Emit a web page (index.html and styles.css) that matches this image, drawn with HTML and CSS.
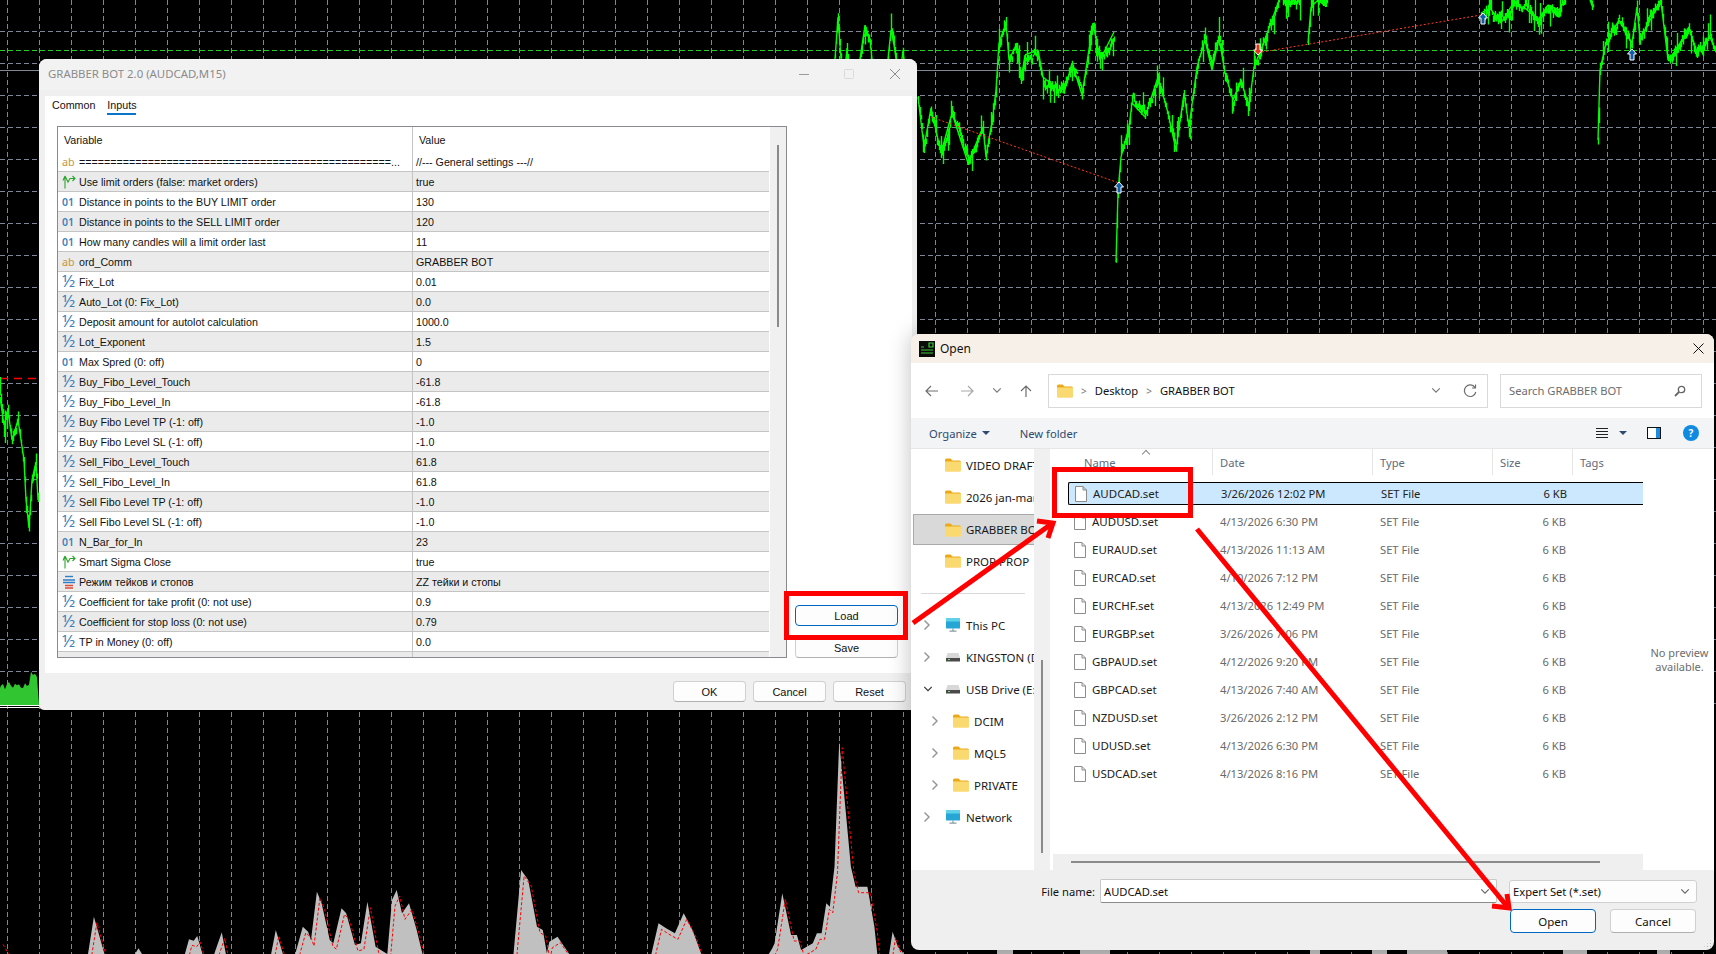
FILE: index.html
```html
<!DOCTYPE html>
<html lang="en">
<head>
    <meta charset="UTF-8">
    <title>GRABBER BOT 2.0</title>
    <link rel="stylesheet" href="styles.css">
</head>
<body>
    <svg width="0" height="0" class="defs">
        <symbol id="bool" viewBox="0 0 14 14">
            <path d="M3 13.500V1M3 1L1 5.500M3 1l3 6 2-3.500h5M10.500 1L13 3.500 10.500 6" fill="none" stroke="#2aa52a" stroke-width="1.100"/>
        </symbol>
        <symbol id="enum" viewBox="0 0 14 14">
            <path d="M3 1.500h8" stroke="#2f7fc8" stroke-width="1.400"/>
            <path d="M1 5h12M1 7.500h12" stroke="#2f7fc8" stroke-width="1.400"/>
            <path d="M3 10.500h8M3 13h8" stroke="#e0483a" stroke-width="1.300"/>
        </symbol>
        <symbol id="folder" viewBox="0 0 16 14">
            <path d="M0 2q0-1.500 1.500-1.500h4l2 2h7q1.500 0 1.500 1.500v1H0z" fill="#eba919"/>
            <path d="M0 3.500h16v9q0 1.300-1.300 1.300H1.300Q0 13.800 0 12.500z" fill="#fbd971"/>
        </symbol>
        <symbol id="file" viewBox="0 0 12 16">
            <path d="M.5.5h7.500l3.500 3.500v11.500H.5zM8 .5V4h3.500" fill="#fff" stroke="#8b8b8b"/>
        </symbol>
        <symbol id="chev-r" viewBox="0 0 8 12">
            <path d="M1.500 1.500L6 6l-4.500 4.500" fill="none" stroke="#9a9a9a" stroke-width="1.500"/>
        </symbol>
        <symbol id="chev-d" viewBox="0 0 12 8">
            <path d="M1.500 1.500L6 6l4.500-4.500" fill="none" stroke="currentColor" stroke-width="1.400"/>
        </symbol>
        <symbol id="drive" viewBox="0 0 16 10">
            <path d="M2.500 1h11L15 6H1z" fill="#d8d8d8"/>
            <rect x="1" y="6" width="14" height="3.500" fill="#4a4a4a"/>
            <rect x="3" y="7" width="2" height="1" fill="#6fe06f"/>
        </symbol>
        <symbol id="monitor" viewBox="0 0 16 16">
            <rect x="0" y="0" width="16" height="12" rx="1" fill="#27a6d6"/>
            <rect x="0" y="0" width="16" height="4" fill="#5fd2ea"/>
            <path d="M8 12v2.500M4 15h8" stroke="#8a9aa5" stroke-width="1.400"/>
        </symbol>
    </svg>

    <svg id="chart" class="chart" width="1716" height="954"></svg>

    <div class="mt-window">
        <div class="mt-title">
            <span class="mt-caption">GRABBER BOT 2.0 (AUDCAD,M15)</span>
            <svg class="mt-controls" width="102" height="12" viewBox="0 0 102 12">
                <path d="M0 6.500h10" stroke="#9a9a9a"/>
                <rect x="45.500" y="1.500" width="9" height="9" rx="1" fill="none" stroke="#dadada"/>
                <path d="M91 1l10 10M101 1L91 11" stroke="#8c8c8c"/>
            </svg>
        </div>
        <div class="mt-client">
            <div class="tabs">
                <span class="tab">Common</span>
                <span class="tab tab-active">Inputs</span>
            </div>
            <div class="mt-main">
                <div class="inputs">
                    <div class="inputs-body">
                        <div class="row row-head"><span class="cell-name">Variable</span><span class="cell-value">Value</span></div>
                        <div class="row"><span class="cell-name"><span class="ico ab">ab</span><span class="clip">==================================================...</span></span><span class="cell-value">//--- General settings ---//</span></div>
                        <div class="row"><span class="cell-name"><svg class="ico-svg"><use href="#bool"/></svg>Use limit orders (false: market orders)</span><span class="cell-value">true</span></div>
                        <div class="row"><span class="cell-name"><span class="ico int">01</span>Distance in points to the BUY LIMIT order</span><span class="cell-value">130</span></div>
                        <div class="row"><span class="cell-name"><span class="ico int">01</span>Distance in points to the SELL LIMIT order</span><span class="cell-value">120</span></div>
                        <div class="row"><span class="cell-name"><span class="ico int">01</span>How many candles will a limit order last</span><span class="cell-value">11</span></div>
                        <div class="row"><span class="cell-name"><span class="ico ab">ab</span>ord_Comm</span><span class="cell-value">GRABBER BOT</span></div>
                        <div class="row"><span class="cell-name"><span class="ico dbl">½</span>Fix_Lot</span><span class="cell-value">0.01</span></div>
                        <div class="row"><span class="cell-name"><span class="ico dbl">½</span>Auto_Lot (0: Fix_Lot)</span><span class="cell-value">0.0</span></div>
                        <div class="row"><span class="cell-name"><span class="ico dbl">½</span>Deposit amount for autolot calculation</span><span class="cell-value">1000.0</span></div>
                        <div class="row"><span class="cell-name"><span class="ico dbl">½</span>Lot_Exponent</span><span class="cell-value">1.5</span></div>
                        <div class="row"><span class="cell-name"><span class="ico int">01</span>Max Spred (0: off)</span><span class="cell-value">0</span></div>
                        <div class="row"><span class="cell-name"><span class="ico dbl">½</span>Buy_Fibo_Level_Touch</span><span class="cell-value">-61.8</span></div>
                        <div class="row"><span class="cell-name"><span class="ico dbl">½</span>Buy_Fibo_Level_In</span><span class="cell-value">-61.8</span></div>
                        <div class="row"><span class="cell-name"><span class="ico dbl">½</span>Buy Fibo Level TP (-1: off)</span><span class="cell-value">-1.0</span></div>
                        <div class="row"><span class="cell-name"><span class="ico dbl">½</span>Buy Fibo Level SL (-1: off)</span><span class="cell-value">-1.0</span></div>
                        <div class="row"><span class="cell-name"><span class="ico dbl">½</span>Sell_Fibo_Level_Touch</span><span class="cell-value">61.8</span></div>
                        <div class="row"><span class="cell-name"><span class="ico dbl">½</span>Sell_Fibo_Level_In</span><span class="cell-value">61.8</span></div>
                        <div class="row"><span class="cell-name"><span class="ico dbl">½</span>Sell Fibo Level TP (-1: off)</span><span class="cell-value">-1.0</span></div>
                        <div class="row"><span class="cell-name"><span class="ico dbl">½</span>Sell Fibo Level SL (-1: off)</span><span class="cell-value">-1.0</span></div>
                        <div class="row"><span class="cell-name"><span class="ico int">01</span>N_Bar_for_In</span><span class="cell-value">23</span></div>
                        <div class="row"><span class="cell-name"><svg class="ico-svg"><use href="#bool"/></svg>Smart Sigma Close</span><span class="cell-value">true</span></div>
                        <div class="row"><span class="cell-name"><svg class="ico-svg"><use href="#enum"/></svg>Режим тейков и стопов</span><span class="cell-value">ZZ тейки и стопы</span></div>
                        <div class="row"><span class="cell-name"><span class="ico dbl">½</span>Coefficient for take profit (0: not use)</span><span class="cell-value">0.9</span></div>
                        <div class="row"><span class="cell-name"><span class="ico dbl">½</span>Coefficient for stop loss (0: not use)</span><span class="cell-value">0.79</span></div>
                        <div class="row"><span class="cell-name"><span class="ico dbl">½</span>TP in Money (0: off)</span><span class="cell-value">0.0</span></div>
                        <div class="row row-cut"><span class="cell-name"></span><span class="cell-value"></span></div>
                    </div>
                    <div class="inputs-scroll"><div class="inputs-thumb"></div></div>
                </div>
                <div class="side-btns">
                    <button class="btn btn-side btn-focus">Load</button>
                    <button class="btn btn-side">Save</button>
                </div>
            </div>
        </div>
        <div class="mt-footer">
            <button class="btn btn-foot">OK</button>
            <button class="btn btn-foot">Cancel</button>
            <button class="btn btn-foot">Reset</button>
        </div>
    </div>

    <div class="open-dialog">
        <div class="od-title">
            <svg class="od-logo" width="16" height="16" viewBox="0 0 16 16">
                <rect width="16" height="16" fill="#0b0b0b"/>
                <path d="M2 6h3M10 2h4v4h-4zM2 9h12M2 12h12" stroke="#3bc83b" stroke-width="1.200" fill="none"/>
            </svg>
            <span>Open</span>
            <svg class="od-close" width="11" height="11" viewBox="0 0 11 11">
                <path d="M.5.5l10 10M10.500.5l-10 10" stroke="#111"/>
            </svg>
        </div>
        <div class="od-toolbar">
            <svg class="tb-ico tb-back" width="16" height="14" viewBox="0 0 16 14"><path d="M14 7H2M7 2L2 7l5 5" fill="none" stroke="#6e6e6e" stroke-width="1.200"/></svg>
            <svg class="tb-ico tb-fwd" width="16" height="14" viewBox="0 0 16 14"><path d="M2 7h12M9 2l5 5-5 5" fill="none" stroke="#a8a8a8" stroke-width="1.200"/></svg>
            <svg class="tb-ico tb-down" width="10" height="7" viewBox="0 0 12 8"><use href="#chev-d"/></svg>
            <svg class="tb-ico tb-up" width="14" height="14" viewBox="0 0 14 14"><path d="M7 13V2M2 7l5-5 5 5" fill="none" stroke="#6e6e6e" stroke-width="1.200"/></svg>
            <div class="address">
                <svg class="addr-folder" width="16" height="14"><use href="#folder"/></svg>
                <span class="addr-sep">&gt;</span>
                <span>Desktop</span>
                <span class="addr-sep">&gt;</span>
                <span>GRABBER BOT</span>
                <svg class="addr-chev" width="10" height="7" viewBox="0 0 12 8"><use href="#chev-d"/></svg>
                <svg class="addr-refresh" width="14" height="14" viewBox="0 0 14 14"><path d="M12 3.500A5.800 5.800 0 1 0 12.800 8M12.500 .5v3.500H9" fill="none" stroke="#6e6e6e" stroke-width="1.200"/></svg>
            </div>
            <div class="search">
                <span>Search GRABBER BOT</span>
                <svg width="12" height="12" viewBox="0 0 12 12"><circle cx="7.500" cy="4.500" r="3.200" fill="none" stroke="#666" stroke-width="1.300"/><path d="M5 7l-4 4" stroke="#666" stroke-width="1.800"/></svg>
            </div>
        </div>
        <div class="od-cmd">
            <span class="cmd-link">Organize</span>
            <span class="caret"></span>
            <span class="cmd-link cmd-new">New folder</span>
            <svg class="cmd-list" width="12" height="11" viewBox="0 0 12 11"><path d="M0 .5h12M0 3.500h12M0 6.500h12M0 9.500h12" stroke="#222"/></svg>
            <span class="caret caret-view"></span>
            <svg class="cmd-pane" width="14" height="12" viewBox="0 0 14 12"><rect x=".5" y=".5" width="13" height="11" fill="#fff" stroke="#111"/><rect x="9" y="1" width="4" height="10" fill="#1e8be0"/></svg>
            <span class="cmd-help">?</span>
        </div>
        <div class="od-body">
            <div class="nav">
                <div class="nav-row"><svg class="nav-folder"><use href="#folder"/></svg>VIDEO DRAFT</div>
                <div class="nav-row"><svg class="nav-folder"><use href="#folder"/></svg>2026 jan-mar</div>
                <div class="nav-row nav-current"><svg class="nav-folder"><use href="#folder"/></svg>GRABBER BOT</div>
                <div class="nav-row"><svg class="nav-folder"><use href="#folder"/></svg>PROP PROP</div>
                <div class="nav-row nav-gap"><div class="nav-line"></div></div>
                <div class="nav-row nav-top"><svg class="nav-chev"><use href="#chev-r"/></svg><svg class="nav-folder"><use href="#monitor"/></svg>This PC</div>
                <div class="nav-row nav-top"><svg class="nav-chev"><use href="#chev-r"/></svg><svg class="nav-drive"><use href="#drive"/></svg>KINGSTON (D:)</div>
                <div class="nav-row nav-top"><svg class="nav-chev nav-open" viewBox="0 0 12 8"><use href="#chev-d"/></svg><svg class="nav-drive"><use href="#drive"/></svg>USB Drive (E:)</div>
                <div class="nav-row nav-sub"><svg class="nav-chev"><use href="#chev-r"/></svg><svg class="nav-folder"><use href="#folder"/></svg>DCIM</div>
                <div class="nav-row nav-sub"><svg class="nav-chev"><use href="#chev-r"/></svg><svg class="nav-folder"><use href="#folder"/></svg>MQL5</div>
                <div class="nav-row nav-sub"><svg class="nav-chev"><use href="#chev-r"/></svg><svg class="nav-folder"><use href="#folder"/></svg>PRIVATE</div>
                <div class="nav-row nav-top"><svg class="nav-chev"><use href="#chev-r"/></svg><svg class="nav-folder"><use href="#monitor"/></svg>Network</div>
            </div>
            <div class="nav-scroll"><div class="nav-thumb"></div></div>
            <div class="files">
                <div class="file-head">
                    <span class="fh-name">Name<span class="sort-up"></span></span>
                    <span class="fh">Date</span>
                    <span class="fh">Type</span>
                    <span class="fh">Size</span>
                    <span class="fh fh-last">Tags</span>
                </div>
                <div class="file-list">
                    <div class="file file-sel"><span class="f-name"><svg class="f-ico"><use href="#file"/></svg>AUDCAD.set</span><span>3/26/2026 12:02 PM</span><span>SET File</span><span class="f-size">6 KB</span></div>
                    <div class="file"><span class="f-name"><svg class="f-ico"><use href="#file"/></svg>AUDUSD.set</span><span>4/13/2026 6:30 PM</span><span>SET File</span><span class="f-size">6 KB</span></div>
                    <div class="file"><span class="f-name"><svg class="f-ico"><use href="#file"/></svg>EURAUD.set</span><span>4/13/2026 11:13 AM</span><span>SET File</span><span class="f-size">6 KB</span></div>
                    <div class="file"><span class="f-name"><svg class="f-ico"><use href="#file"/></svg>EURCAD.set</span><span>4/10/2026 7:12 PM</span><span>SET File</span><span class="f-size">6 KB</span></div>
                    <div class="file"><span class="f-name"><svg class="f-ico"><use href="#file"/></svg>EURCHF.set</span><span>4/13/2026 12:49 PM</span><span>SET File</span><span class="f-size">6 KB</span></div>
                    <div class="file"><span class="f-name"><svg class="f-ico"><use href="#file"/></svg>EURGBP.set</span><span>3/26/2026 7:06 PM</span><span>SET File</span><span class="f-size">6 KB</span></div>
                    <div class="file"><span class="f-name"><svg class="f-ico"><use href="#file"/></svg>GBPAUD.set</span><span>4/12/2026 9:20 PM</span><span>SET File</span><span class="f-size">6 KB</span></div>
                    <div class="file"><span class="f-name"><svg class="f-ico"><use href="#file"/></svg>GBPCAD.set</span><span>4/13/2026 7:40 AM</span><span>SET File</span><span class="f-size">6 KB</span></div>
                    <div class="file"><span class="f-name"><svg class="f-ico"><use href="#file"/></svg>NZDUSD.set</span><span>3/26/2026 2:12 PM</span><span>SET File</span><span class="f-size">6 KB</span></div>
                    <div class="file"><span class="f-name"><svg class="f-ico"><use href="#file"/></svg>UDUSD.set</span><span>4/13/2026 6:30 PM</span><span>SET File</span><span class="f-size">6 KB</span></div>
                    <div class="file"><span class="f-name"><svg class="f-ico"><use href="#file"/></svg>USDCAD.set</span><span>4/13/2026 8:16 PM</span><span>SET File</span><span class="f-size">6 KB</span></div>
                </div>
                <div class="hscroll"><div class="hthumb"></div></div>
            </div>
            <div class="preview">No preview available.</div>
        </div>
        <div class="od-footer">
            <div class="foot-row">
                <span class="foot-label">File name:</span>
                <div class="foot-input"><span>AUDCAD.set</span><svg width="10" height="7" viewBox="0 0 12 8"><use href="#chev-d"/></svg></div>
                <div class="foot-filter"><span>Expert Set (*.set)</span><svg width="10" height="7" viewBox="0 0 12 8"><use href="#chev-d"/></svg></div>
            </div>
            <div class="foot-row foot-btns">
                <button class="btn btn-od btn-focus">Open</button>
                <button class="btn btn-od">Cancel</button>
            </div>
        </div>
    </div>

    <svg class="marks" width="1716" height="954">
        <rect x="786.500" y="593.500" width="119" height="44" fill="none" stroke="#f00" stroke-width="5"/>
        <rect x="1054.500" y="469.500" width="136" height="46" fill="none" stroke="#f00" stroke-width="5"/>
        <path d="M913 623L1050 525" stroke="#f00" stroke-width="5"/>
        <path d="M1037 521L1053 523L1048 538" fill="none" stroke="#f00" stroke-width="5"/>
        <path d="M1197 529L1506 905" stroke="#f00" stroke-width="5"/>
        <path d="M1492 906L1509 908L1507 894" fill="none" stroke="#f00" stroke-width="5"/>
    </svg>

    <script src="chart.js"></script>
</body>
</html>
```

FILE: styles.css
```css
* {
    box-sizing: border-box;
}
html, body {
    margin: 0;
    height: 100%;
}
body {
    position: relative;
    width: 1716px;
    height: 954px;
    overflow: hidden;
    background: #000;
    font-family: "Noto Sans", "Liberation Sans", sans-serif;
    font-size: 11px;
    color: #111;
}
.defs {
    position: absolute;
}
.chart, .marks {
    position: absolute;
    left: 0;
    top: 0;
}

/* terminal properties window */
.mt-window {
    position: absolute;
    left: 39px;
    top: 59px;
    width: 878px;
    height: 651px;
    display: flex;
    flex-direction: column;
    padding: 0 5px 0 6px;
    background: #f0f0f0;
    border-radius: 8px 8px 0 5px;
    font-family: "Liberation Sans", sans-serif;
    font-size: 10.700px;
}
.mt-title {
    height: 37px;
    flex: none;
    display: flex;
    justify-content: space-between;
    margin: 0 -5px 0 -6px;
    padding: 7px 16px 0 9px;
    background: linear-gradient(#f2f2f2 31px, #efefef 31px);
    border-radius: 8px 8px 0 0;
}
.mt-caption {
    font-family: "Noto Sans", sans-serif;
    font-size: 11.400px;
    color: #8b8b8b;
}
.mt-controls {
    margin-top: 2px;
}
.mt-client {
    height: 577px;
    flex: none;
    display: flex;
    flex-direction: column;
    background: #fff;
    padding-left: 12px;
}
.tabs {
    display: flex;
    gap: 12px;
    height: 30px;
    margin-left: -5px;
}
.tab {
    height: 19px;
    padding-top: 2px;
    line-height: 15px;
}
.tab-active {
    border-bottom: 2px solid #0a74c8;
}
.mt-main {
    display: flex;
    align-items: flex-end;
}
.inputs {
    width: 730px;
    height: 532px;
    display: flex;
    border: 1px solid #878b90;
    overflow: hidden;
}
.inputs-body {
    width: 711px;
    flex: none;
}
.row {
    display: flex;
    height: 20px;
    align-items: center;
    border-bottom: 1px solid #c4c4c4;
    line-height: 19px;
    white-space: nowrap;
}
.row:nth-child(odd) {
    background: #ebebeb;
}
.row-head,
.row-head:nth-child(odd) {
    height: 25px;
    background: #fff;
    border-bottom: none;
}
.row-head .cell-name {
    padding-left: 6px;
}
.row-head .cell-value {
    padding-left: 6px;
}
.row-cut {
    border-bottom: none;
}
.cell-name {
    width: 355px;
    height: 100%;
    flex: none;
    display: flex;
    align-items: center;
    padding: 1px 0 0 4px;
    border-right: 1px solid #c4c4c4;
}
.cell-value {
    padding: 1px 0 0 3px;
}
.clip {
    overflow: hidden;
}
.ico {
    width: 17px;
    flex: none;
    font-family: "Noto Sans", sans-serif;
}
.ab {
    color: #c39544;
}
.int {
    color: #3f7fba;
    font-weight: 600;
    font-size: 10.500px;
}
.dbl {
    color: #3f7fba;
    font-size: 17px;
    line-height: 14px;
    margin-top: -2px;
}
.ico-svg {
    width: 14px;
    height: 14px;
    flex: none;
    margin-right: 3px;
}
.inputs-scroll {
    width: 17px;
    flex: none;
    margin-left: 1px;
    padding: 18px 0 0 7px;
    background: #f0f0f0;
}
.inputs-thumb {
    width: 2px;
    height: 182px;
    background: #8a8a8a;
}
.side-btns {
    display: flex;
    flex-direction: column;
    gap: 11px;
    margin-left: 8px;
}
.btn {
    font-family: inherit;
    font-size: 11px;
    color: #111;
    background: #fdfdfd;
    border: 1px solid #d0d0d0;
    border-bottom-color: #b0b0b0;
    border-radius: 4px;
    padding: 0;
}
.btn-side {
    width: 103px;
    height: 21px;
}
.btn-focus {
    border: 1.500px solid #0067c0;
}
.mt-footer {
    flex: 1;
    display: flex;
    justify-content: flex-end;
    gap: 7px;
    padding-top: 8px;
    margin-right: 6px;
}
.btn-foot {
    width: 73px;
    height: 21px;
}

/* windows open dialog */
.open-dialog {
    position: absolute;
    left: 911px;
    top: 334px;
    width: 803px;
    height: 616px;
    display: flex;
    flex-direction: column;
    background: #efefef;
    border-radius: 8px;
    box-shadow: 0 0 22px rgba(0, 0, 0, .25);
    font-size: 11.200px;
    overflow: hidden;
}
.od-title {
    height: 29px;
    flex: none;
    display: flex;
    align-items: center;
    gap: 5px;
    padding: 0 10px 0 8px;
    background: #f7f0e9;
    font-size: 12px;
}
.od-close {
    margin-left: auto;
}
.od-toolbar {
    height: 55px;
    flex: none;
    display: flex;
    align-items: center;
    background: #fff;
}
.tb-back {
    margin-left: 13px;
}
.tb-fwd {
    margin-left: 19px;
}
.tb-down {
    margin-left: 17px;
    color: #777;
}
.tb-up {
    margin-left: 17px;
}
.address {
    width: 440px;
    height: 34px;
    margin-left: 15px;
    display: flex;
    align-items: center;
    gap: 8px;
    padding: 0 10px 0 8px;
    border: 1px solid #d9d9d9;
}
.addr-sep {
    color: #777;
    font-size: 10px;
}
.addr-chev {
    margin-left: auto;
    color: #777;
}
.addr-refresh {
    margin-left: 14px;
}
.search {
    width: 202px;
    height: 34px;
    margin-left: 12px;
    display: flex;
    align-items: center;
    justify-content: space-between;
    padding: 0 15px 0 8px;
    border: 1px solid #d9d9d9;
    color: #6d6d6d;
}
.od-cmd {
    height: 31px;
    flex: none;
    display: flex;
    align-items: center;
    padding-left: 18px;
    background: #f3f4f6;
    border-bottom: 1px solid #e6e6e6;
}
.cmd-link {
    color: #2e4a6e;
}
.caret {
    width: 0;
    height: 0;
    margin-left: 5px;
    border: 4px solid transparent;
    border-top: 4px solid #2e4a6e;
    border-bottom: 0;
}
.cmd-new {
    margin-left: 30px;
}
.cmd-list {
    margin-left: auto;
}
.caret-view {
    margin-left: 11px;
}
.cmd-pane {
    margin-left: 20px;
}
.cmd-help {
    width: 16px;
    height: 16px;
    margin: 0 15px 0 22px;
    border-radius: 50%;
    background: #0f8ae0;
    color: #fff;
    font-size: 10px;
    font-weight: 700;
    line-height: 16px;
    text-align: center;
}
.od-body {
    height: 421px;
    flex: none;
    display: flex;
    background: #fff;
}
.nav {
    width: 123px;
    flex: none;
    overflow: hidden;
}
.nav-row {
    height: 32px;
    display: flex;
    align-items: center;
    white-space: nowrap;
    padding-left: 34px;
    color: #1a1a1a;
    font-size: 11.500px;
}
.nav-current {
    height: 31px;
    margin: 1px 0 0 2px;
    background: #d9d9d9;
    border: 1px solid #a9a9a9;
    border-right: 0;
    padding-left: 31px;
}
.nav-gap {
    padding: 0 9px 0 10px;
}
.nav-line {
    width: 100%;
    height: 1px;
    background: #d9d9d9;
}
.nav-folder {
    width: 16px;
    height: 14px;
    flex: none;
    margin-right: 5px;
}
.nav-drive {
    width: 16px;
    height: 10px;
    flex: none;
    margin-right: 5px;
}
.nav-top {
    padding-left: 12px;
}
.nav-sub {
    padding-left: 20px;
}
.nav-chev {
    width: 8px;
    height: 12px;
    flex: none;
    margin-right: 14px;
}
.nav-open {
    width: 10px;
    height: 8px;
    margin: 0 12px 0 0;
    color: #333;
}
.nav-scroll {
    width: 16px;
    flex: none;
    padding: 211px 0 0 7px;
    background: #f0f0f0;
}
.nav-thumb {
    width: 2px;
    height: 193px;
    background: #8a8a8a;
}
.files {
    width: 590px;
    flex: none;
    margin: 0 2px 0 3px;
    display: flex;
    flex-direction: column;
}
.file-head {
    display: grid;
    grid-template-columns: 160px 160px 120px 80px 1fr;
    height: 26px;
    margin-bottom: 7px;
    flex: none;
    color: #5f6b7c;
}
.fh-name {
    position: relative;
    padding: 6px 0 0 31px;
    border-right: 1px solid #e5e5e5;
}
.sort-up {
    position: absolute;
    left: 90px;
    top: 2px;
    width: 6px;
    height: 6px;
    border-top: 1px solid #888;
    border-left: 1px solid #888;
    transform: rotate(45deg);
}
.fh {
    padding: 6px 0 0 7px;
    border-right: 1px solid #e5e5e5;
}
.fh-last {
    border-right: 0;
}
.file-list {
    flex: 1;
}
.file {
    display: grid;
    grid-template-columns: 152px 160px 120px 66px 1fr;
    align-items: center;
    width: 575px;
    height: 23px;
    margin: 0 0 5px 15px;
    color: #6a6a6a;
}
.file-sel {
    background: #cce8ff;
    color: #222;
    border: 1px solid #000;
    border-right: 0;
    border-radius: 2px 0 0 2px;
}
.f-name {
    display: flex;
    align-items: center;
    padding-left: 6px;
    color: #222;
    font-size: 11.500px;
}
.f-ico {
    width: 12px;
    height: 16px;
    flex: none;
    margin-right: 6px;
}
.f-size {
    text-align: right;
}
.hscroll {
    height: 16px;
    flex: none;
    padding: 7px 0 0 18px;
    background: #efefef;
}
.hthumb {
    width: 529px;
    height: 2px;
    background: #8a8a8a;
}
.preview {
    width: 69px;
    flex: none;
    padding: 197px 2px 0;
    color: #6d6d6d;
    text-align: center;
    line-height: 14px;
    font-size: 11px;
}
.od-footer {
    position: relative;
    flex: 1;
    display: flex;
    flex-direction: column;
    gap: 6px;
    padding: 9px 17px 0 0;
}
.od-footer::after {
    content: "";
    position: absolute;
    right: 2px;
    bottom: 2px;
    width: 9px;
    height: 9px;
    background: radial-gradient(#b5b5b5 40%, transparent 45%) 0 0 / 3px 3px;
    clip-path: polygon(100% 0, 100% 100%, 0 100%);
}
.foot-row {
    display: flex;
    justify-content: flex-end;
    align-items: center;
}
.foot-label {
    margin-right: 5px;
}
.foot-input {
    width: 397px;
    height: 24px;
    display: flex;
    align-items: center;
    justify-content: space-between;
    padding: 0 6px 0 3px;
    background: #fff;
    border: 1px solid #c8c8c8;
    border-bottom-color: #8a8a8a;
    border-radius: 2px;
}
.foot-filter {
    width: 188px;
    height: 23px;
    margin-left: 12px;
    display: flex;
    align-items: center;
    justify-content: space-between;
    padding: 0 6px 0 3px;
    background: #fdfdfd;
    border: 1px solid #d0d0d0;
    border-radius: 3px;
}
.foot-input svg, .foot-filter svg {
    color: #666;
}
.foot-btns {
    gap: 14px;
    padding-right: 1px;
}
.btn-od {
    width: 86px;
    height: 24px;
    font-size: 11.500px;
}
```

FILE: chart.js
```js
// draws the chart behind the two windows
const svg = document.getElementById('chart');
const NS = 'http://www.w3.org/2000/svg';

function add(tag, attrs) {
    const el = document.createElementNS(NS, tag);
    for (const k in attrs) el.setAttribute(k, attrs[k]);
    svg.appendChild(el);
    return el;
}

// small seeded random so the noise is the same each load
let seed = 12345;
function rnd() {
    seed = (seed * 16807) % 2147483647;
    return seed / 2147483647;
}

const GRID = '#7d8796';
for (let x = 7; x < 1716; x += 32) {
    add('line', { x1: x + .5, y1: 0, x2: x + .5, y2: 954, stroke: GRID, 'stroke-dasharray': '5 3' });
}
for (let y = 31; y < 704; y += 32) {
    add('line', { x1: 0, y1: y + .5, x2: 1716, y2: y + .5, stroke: GRID, 'stroke-dasharray': '5 3' });
}
add('line', { x1: 0, y1: 50.5, x2: 1716, y2: 50.5, stroke: '#22d022', 'stroke-dasharray': '5 3' });
add('line', { x1: 0, y1: 70.5, x2: 1716, y2: 70.5, stroke: '#7d8796' });
add('line', { x1: 0, y1: 378.5, x2: 39, y2: 378.5, stroke: '#f00', 'stroke-width': 1.5, 'stroke-dasharray': '8 6' });

const price = [
    [[0, 397], [4, 425], [8, 410], [12, 440], [18, 420], [24, 460], [26, 500], [29, 528], [32, 480], [36, 462], [38, 500]],
    [[835, 59], [838, 17], [841, 59]],
    [[846, 59], [847, 48], [848, 59]],
    [[860, 59], [865, 25], [870, 40], [872, 59]],
    [[888, 59], [891, 30], [894, 45], [896, 59]],
    [[902, 59], [903, 50], [904, 59]],
    [[918, 97], [924, 147], [931, 108], [941, 153], [952, 113], [968, 163], [983, 127], [986, 157], [993, 115], [996, 90], [999, 43], [1006, 23],
     [1009, 60], [1017, 43], [1021, 80], [1025, 55], [1038, 50], [1043, 77], [1056, 88], [1064, 93], [1072, 63], [1082, 95], [1093, 23], [1100, 60], [1114, 32]],
    [[1116, 262], [1118, 193], [1119, 180], [1121, 157], [1129, 127], [1132, 103], [1145, 117], [1158, 77], [1168, 113], [1176, 150], [1184, 93], [1189, 127],
     [1197, 67], [1205, 40], [1212, 70], [1219, 38], [1225, 73], [1233, 100], [1241, 80], [1249, 107], [1254, 67], [1262, 47], [1272, 20], [1279, 0]],
    [[1283, 0], [1290, 5], [1300, 0]],
    [[1308, 43], [1311, 7], [1318, 0], [1324, 5], [1327, 0]],
    [[1481, 13], [1490, 8], [1501, 23], [1512, 5], [1525, 8], [1538, 20], [1548, 5], [1559, 10], [1565, 0]],
    [[1590, 0], [1593, 8]],
    [[1598, 140], [1600, 70], [1606, 43], [1619, 20], [1632, 43], [1637, 7], [1640, 40], [1650, 20], [1661, 2], [1668, 60], [1676, 50], [1689, 27], [1697, 53], [1710, 37], [1716, 52]]
];

let d = '';
for (const line of price) {
    let wob = 0;
    for (let i = 0; i < line.length - 1; i++) {
        const [x1, y1] = line[i];
        const [x2, y2] = line[i + 1];
        const steps = Math.max(1, x2 - x1);
        for (let s = 0; s <= steps; s++) {
            wob = wob * .75 + (rnd() - .5) * 7;
            const y = y1 + (y2 - y1) * s / steps + wob;
            const up = 1 + rnd() * 5 + (rnd() > .93 ? 12 : 0);
            const dn = 1 + rnd() * 5 + (rnd() > .93 ? 12 : 0);
            d += `M${x1 + s + .5} ${Math.max(0, y - up).toFixed(1)}V${(y + dn).toFixed(1)}`;
        }
        d += `M${x1} ${y1}L${x2} ${y2}`;
    }
}
add('path', { d, stroke: '#00ff00', 'stroke-width': 1.4, fill: 'none' });

// dotted lines between deals
add('path', { d: 'M931 117L1119 183M1262 52L1481 15', stroke: '#ff3b1e', 'stroke-dasharray': '2 2', fill: 'none' });

function arrow(x, y, up, color) {
    const s = up ? 1 : -1;
    const pts = [[0, -6], [4.500, -1], [2, -1], [2, 5], [-2, 5], [-2, -1], [-4.500, -1]];
    add('polygon', {
        points: pts.map(p => `${x + p[0]},${y + p[1] * s}`).join(' '),
        fill: color, stroke: '#fff', 'stroke-width': 1
    });
}
arrow(1119, 188, true, '#0f5ca8');
arrow(1483, 19, true, '#0f5ca8');
arrow(1632, 55, true, '#0f5ca8');
arrow(1258, 49, false, '#e0301e');

// histogram at the bottom left strip
let green = 'M0 705L0 688';
for (let x = 1; x < 39; x += 2) green += `L${x} ${690 - rnd() * 8 - (x > 30 ? 12 : 0)}`;
green += 'L39 705Z';
add('path', { d: green, fill: '#31c531' });
add('line', { x1: 0, y1: 705.5, x2: 39, y2: 705.5, stroke: '#fff' });
add('line', { x1: 0, y1: 707.5, x2: 39, y2: 707.5, stroke: '#fff' });

// indicator peaks, read from the picture as x / 1.704, 700 + y / 3
const peaks = [
    [[0, 715], [15, 762]],
    [[150, 762], [160, 650], [178, 762]],
    [[230, 762], [236, 745], [242, 762]],
    [[315, 762], [322, 718], [330, 722], [336, 708], [345, 762]],
    [[365, 762], [378, 697], [385, 762]],
    [[462, 762], [470, 690], [482, 762]],
    [[503, 762], [516, 680], [525, 695], [530, 720], [540, 575], [548, 610], [562, 720], [568, 730], [582, 625], [590, 640], [605, 735], [615, 730], [626, 605], [640, 740], [660, 762],
     [668, 600], [676, 570], [685, 640], [697, 610], [710, 690], [720, 762]],
    [[875, 762], [888, 510], [900, 540], [915, 680], [925, 690], [932, 760], [936, 725], [950, 710], [970, 762]],
    [[1110, 762], [1122, 670], [1135, 685], [1150, 700], [1165, 640], [1180, 690], [1195, 762]],
    [[1310, 762], [1316, 745], [1320, 730], [1333, 580], [1348, 705], [1358, 705], [1365, 750], [1385, 730], [1392, 700], [1400, 700], [1408, 610], [1414, 620], [1422, 500], [1430, 125],
     [1450, 500], [1458, 560], [1478, 560], [1490, 680], [1495, 762]],
    [[1515, 762], [1521, 695], [1530, 740], [1540, 762]]
];
for (const peak of peaks) {
    const pts = peak.map(p => `${(p[0] / 1.704).toFixed(1)},${(700 + p[1] / 3).toFixed(1)}`).join(' ');
    add('polygon', { points: pts, fill: '#c0c0c0' });
    const red = peak.map(p => `${(p[0] / 1.704 + 3).toFixed(1)},${(700 + p[1] / 3 + 6).toFixed(1)}`).join(' ');
    add('polyline', { points: red, fill: 'none', stroke: '#f00', 'stroke-dasharray': '3 2' });
}

// bits of the indicator that show under the open dialog
for (const [x, w] of [[997, 16], [1080, 30], [1310, 10], [1372, 15], [1407, 40], [1563, 24], [1657, 13]]) {
    add('rect', { x, y: 950, width: w, height: 4, fill: '#c0c0c0' });
}
```
